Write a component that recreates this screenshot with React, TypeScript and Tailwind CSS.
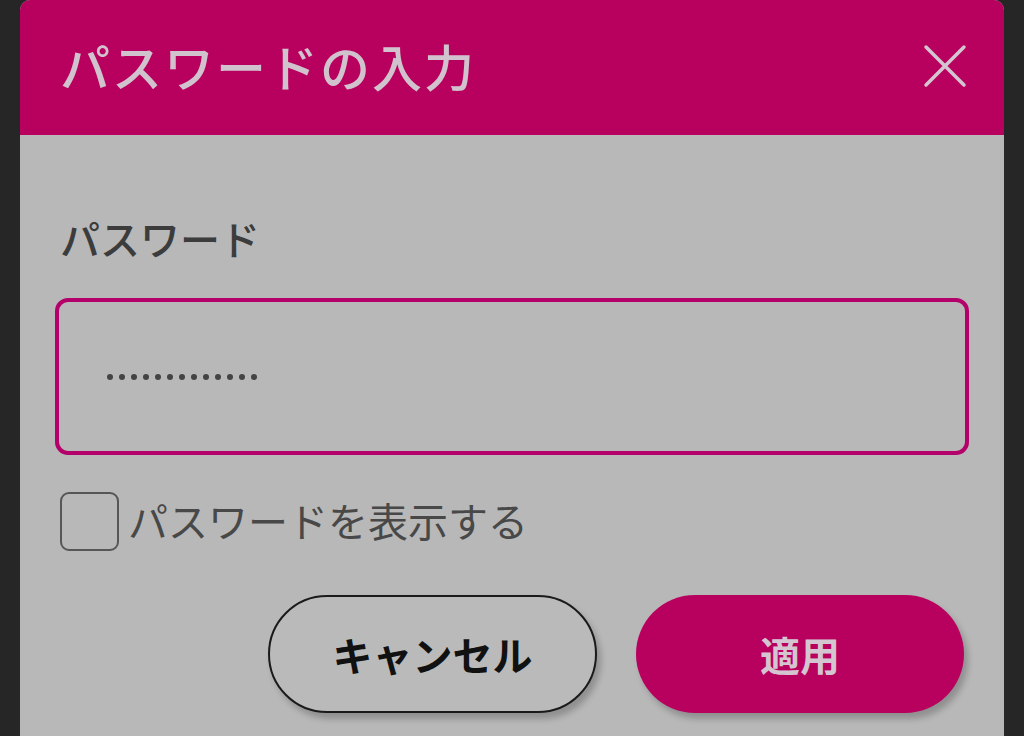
import { useState } from 'react'

const font = { fontFamily: '"Noto Sans CJK JP", "Noto Sans", sans-serif' }

function CloseIcon() {
  return (
    <svg width="44" height="44" viewBox="0 0 44 44" fill="none">
      <path d="M3 3L41 41M41 3L3 41" stroke="#d4c6d0" strokeWidth="3.5" strokeLinecap="round" />
    </svg>
  )
}

export default function App() {
  const [show, setShow] = useState(false)
  const dots = Array.from({ length: 13 })

  return (
    <div className="h-[736px] w-[1024px] overflow-hidden bg-[#262626] px-[20px]" style={font}>
      <div className="w-[984px] overflow-hidden rounded-t-[10px] bg-[#b8b8b8]">
        <div className="flex h-[135px] items-center justify-between bg-[#b8005f] pl-[40px] pr-[34px]">
          <h1 className="-mt-[6px] text-[50px] font-medium leading-none tracking-[2px] text-[#d0c3cd]">
            パスワードの入力
          </h1>
          <button className="-mt-[4px] flex h-[50px] w-[50px] items-center justify-center">
            <CloseIcon />
          </button>
        </div>

        <div className="px-[35px] pt-[80px] pb-[40px]">
          <label className="block pl-[5px] text-[40px] font-medium leading-[46px] text-[#3c3c3c]">
            パスワード
          </label>

          <div className="mt-[37px] flex h-[157px] items-center rounded-[13px] border-[4px] border-[#b3006a] pl-[48px]">
            <div className="flex gap-[6px]">
              {dots.map((_, i) => (
                <span key={i} className="h-[6px] w-[6px] rounded-full bg-[#444444]" />
              ))}
            </div>
          </div>

          <label className="mt-[37px] flex items-center pl-[5px]">
            <button
              onClick={() => setShow(!show)}
              className="h-[59px] w-[59px] rounded-[9px] border-2 border-[#565656]"
            />
            <span className="ml-[9px] -mt-[4px] text-[40px] leading-none text-[#484848]">
              パスワードを表示する
            </span>
          </label>

          <div className="mt-[44px] flex justify-end gap-[39px] pr-[5px]">
            <button className="flex h-[118px] w-[329px] items-center justify-center rounded-full border-2 border-[#1a1a1a] bg-[#bababa] text-[40px] font-bold text-[#111111] shadow-[4px_6px_6px_rgba(0,0,0,0.22)]">
              キャンセル
            </button>
            <button className="flex h-[118px] w-[328px] items-center justify-center rounded-full bg-[#b8005f] text-[40px] font-bold text-[#d4c6d0] shadow-[4px_6px_6px_rgba(0,0,0,0.22)]">
              適用
            </button>
          </div>
        </div>
      </div>
    </div>
  )
}
